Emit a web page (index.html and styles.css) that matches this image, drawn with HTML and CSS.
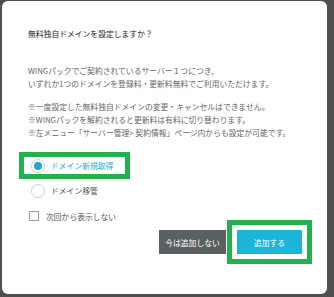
FILE: index.html
```html
<!DOCTYPE html>
<html lang="ja">
<head>
<meta charset="utf-8">
<title>無料独自ドメイン</title>
<link rel="stylesheet" href="styles.css">
</head>
<body>
<div class="modal">
  <h2 class="title">無料独自ドメインを設定しますか？</h2>
  <p class="lead">WINGパックでご契約されているサーバー１つにつき、<br>いずれか1つのドメインを登録料・更新料無料でご利用いただけます。</p>
  <p class="notes">※一度設定した無料独自ドメインの変更・キャンセルはできません。<br>※WINGパックを解約されると更新料は有料に切り替わります。<br>※左メニュー「サーバー管理&gt; 契約情報」ページ内からも設定が可能です。</p>
  <div class="options">
    <label class="radio radio-selected highlight"><span class="radio-circle"><span class="radio-dot"></span></span><span class="radio-label">ドメイン新規取得</span></label>
    <label class="radio"><span class="radio-circle"></span><span class="radio-label">ドメイン移管</span></label>
  </div>
  <label class="check"><span class="check-box"></span><span class="check-label">次回から表示しない</span></label>
  <div class="actions">
    <button class="btn btn-gray">今は追加しない</button>
    <button class="btn btn-blue highlight-btn">追加する</button>
  </div>
</div>
</body>
</html>
```
FILE: styles.css
```css
html, body {
  margin: 0;
  padding: 0;
}
body {
  width: 334px;
  height: 297px;
  overflow: hidden;
  background: #4f4f4f;
  font-family: "Noto Sans CJK JP", "Noto Sans", sans-serif;
  font-size: 7.8px;
  line-height: 13px;
  color: #666;
}
.modal {
  box-sizing: border-box;
  margin: 1px 7px 0 2px;
  height: 293px;
  background: #fff;
  border-radius: 6px;
  padding: 26px 25px 0 26px;
  display: flex;
  flex-direction: column;
  align-items: flex-start;
}
.title {
  margin: 0;
  font-size: 7.8px;
  line-height: 13px;
  font-weight: normal;
  color: #222;
}
.lead {
  margin: 24px 0 0;
}
.notes {
  margin: 10px 0 0;
}
.options {
  margin: 18px 0 0 -4px;
  display: flex;
  flex-direction: column;
  gap: 8px;
}
.radio {
  display: flex;
  align-items: center;
  height: 17px;
  padding: 0 12px 0 7px;
  gap: 6px;
  color: #555;
}
.radio-selected {
  color: #2aa8d8;
}
.highlight {
  outline: 5px solid #23b14d;
  outline-offset: 0;
}
.radio-circle {
  box-sizing: border-box;
  width: 14px;
  height: 14px;
  border: 1px solid #cfcfcf;
  border-radius: 50%;
  display: flex;
  align-items: center;
  justify-content: center;
  background: #fff;
}
.radio-dot {
  width: 8px;
  height: 8px;
  border-radius: 50%;
  background: #1aa9d7;
}
.check {
  margin: 11px 0 0 1px;
  display: flex;
  align-items: center;
  gap: 7px;
  height: 12px;
  color: #555;
}
.check-box {
  box-sizing: border-box;
  width: 10px;
  height: 10px;
  border: 1px solid #9a9a9a;
  background: #fff;
}
.actions {
  margin-top: 8px;
  align-self: stretch;
  display: flex;
  justify-content: flex-end;
  gap: 11px;
}
.btn {
  height: 24px;
  border: none;
  padding: 0;
  margin: 0;
  font-family: inherit;
  font-size: 7.8px;
  color: #fff;
  text-align: center;
}
.btn-gray {
  width: 67px;
  background: #5b6062;
}
.btn-blue {
  width: 65px;
  background: #1cb4d8;
}
.highlight-btn {
  outline: 5px solid #23b14d;
  outline-offset: 5px;
}
```
